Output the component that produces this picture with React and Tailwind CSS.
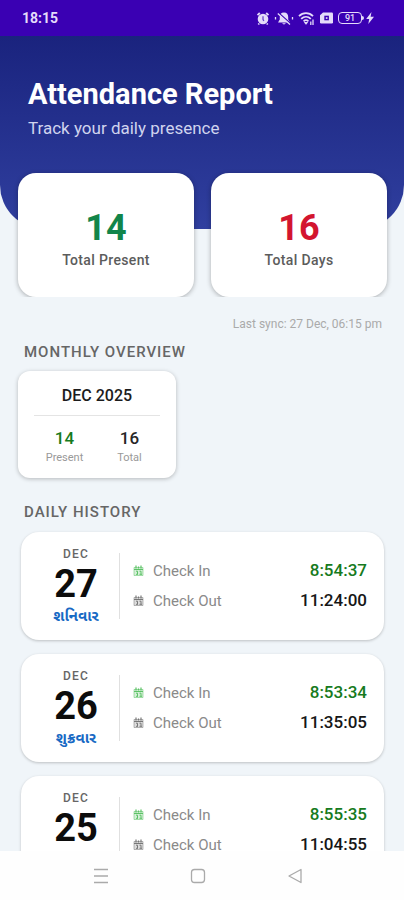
const days = [
  { month: "DEC", day: "27", weekday: "શનિવાર", checkIn: "8:54:37", checkOut: "11:24:00" },
  { month: "DEC", day: "26", weekday: "શુક્રવાર", checkIn: "8:53:34", checkOut: "11:35:05" },
  { month: "DEC", day: "25", weekday: "ગુરુવાર", checkIn: "8:55:35", checkOut: "11:04:55" },
];

const StatusBar = () => {
  return (
    <div className="flex h-9 shrink-0 items-center justify-between bg-[#3a00b3] pl-[22px] pr-[29px] text-[#e4dcfa]">
      <span className="text-sm font-bold">18:15</span>
      <div className="flex items-center gap-1">
        {/* Alarm */}
        <svg width="14" height="15" viewBox="0 0 14 15" fill="none">
          <circle cx="7" cy="8" r="5.300" fill="currentColor" />
          <path d="M1.500 4.200 3.800 2M12.500 4.200 10.200 2M3.200 12.500l-.9 1M10.800 12.500l.9 1" stroke="currentColor" strokeWidth="1.8" />
          <path d="M7 5.300v3l.8 1.700" stroke="#6a44cc" strokeWidth="1.300" />
        </svg>
        {/* Muted bell */}
        <svg width="20" height="15" viewBox="0 0 20 15" fill="none">
          <path d="M10 1.500c-3 0-4.200 2-4.200 4.500v2.500L4 11.500h12L14.200 8.500V6c0-2.500-1.200-4.500-4.200-4.500zM8.300 12.300h3.400c-.3 1.500-3.100 1.500-3.400 0z" fill="currentColor" />
          <path d="M5 2.300 17 13" stroke="#3a00b3" strokeWidth="1.500" />
          <path d="M3.800 2.500 16 13.500M1.500 6v2.500M18.500 6v2.500" stroke="currentColor" strokeWidth="1.300" />
        </svg>
        {/* Wifi */}
        <svg width="17" height="15" viewBox="0 0 17 15" fill="none" stroke="currentColor" strokeWidth="1.800">
          <path d="M1 5.200c4-4 10-4 14 0M3.200 7.800c2.800-2.700 6.800-2.700 9.600 0M5.600 10.300c1.500-1.400 3.300-1.400 4.800 0" />
          <path d="M6.500 11.500h3L8 13.300z" fill="currentColor" strokeWidth="1" />
          <path d="M12.800 10.500v3.500M15 8.500v5.500" strokeWidth="1.300" />
        </svg>
        {/* Sim card */}
        <svg width="15" height="14" viewBox="0 0 15 14">
          <path d="M4 1.500h8.800A1.200 1.200 0 0 1 14 2.700v8.600a1.200 1.200 0 0 1-1.200 1.200H2.200A1.200 1.200 0 0 1 1 11.300V4.300z" fill="currentColor" />
          <path d="M5.300 4.700h4.600v4.600H5.300z" fill="#3a00b3" />
          <path d="M6.800 6.200h1.700v1.700H6.800z" fill="currentColor" />
        </svg>
        <div className="flex items-center">
          <span className="flex h-3 w-6 items-center justify-center rounded border border-current text-[9px] font-medium leading-none">91</span>
          <span className="h-1 w-[2px] rounded-r bg-current" />
          <svg width="10" height="14" viewBox="0 0 10 14" className="ml-px">
            <path d="M6.500 1 1.200 8h3L3.300 13 9 5.800H5.600z" fill="currentColor" />
          </svg>
        </div>
      </div>
    </div>
  );
};

const StatCard = ({ value, label, color }) => {
  return (
    <div className="flex h-[124px] flex-1 flex-col items-center justify-center rounded-[18px] bg-white pt-2 shadow-[0_1px_5px_rgba(0,0,0,0.3)]">
      <span className={`text-[36px] font-bold leading-10 ${color}`}>{value}</span>
      <span className="mt-0.5 text-sm font-medium tracking-wide text-[#5c5c5c]">{label}</span>
    </div>
  );
};

const CalendarIcon = ({ className }) => {
  return (
    <svg width="11" height="12" viewBox="0 0 11 12" fill="none" stroke="currentColor" className={className}>
      <path d="M1 2.500h9v8H1z" fill="currentColor" fillOpacity="0.25" strokeOpacity="0.5" />
      <path d="M3 .5v3M5.500 1.500v2M8 .5v3M1 4.500h9" strokeWidth="1.200" />
      <path d="M3 6.200h1.500v3M3 9.300h2M6.500 6.200H8v3M6.500 9.300H9" />
    </svg>
  );
};

const TimeRow = ({ label, time, iconColor, timeColor }) => {
  return (
    <div className="flex h-[30px] items-center">
      <CalendarIcon className={iconColor} />
      <dt className="ml-[9px] text-[15px] text-[#8a8a8a]">{label}</dt>
      <dd className={`ml-auto text-[17px] font-medium ${timeColor}`}>{time}</dd>
    </div>
  );
};

const DayCard = ({ item }) => {
  return (
    <li className="flex h-[108px] shrink-0 items-center rounded-[18px] bg-white pl-3 pr-[17px] shadow-[0_1px_3px_rgba(0,0,0,0.22)]">
      <div className="flex w-[86px] flex-col items-center">
        <span className="text-xs font-medium leading-4 tracking-widest text-[#666]">{item.month}</span>
        <span className="text-[38px] font-bold leading-[44px] text-[#0c0c0c]">{item.day}</span>
        <span className="text-[15px] font-bold leading-5 text-[#1769c4]">{item.weekday}</span>
      </div>
      <div className="h-[66px] w-px bg-[#e0e0e0]" />
      <dl className="ml-[13px] flex-1">
        <TimeRow label="Check In" time={item.checkIn} iconColor="text-[#5cc266]" timeColor="text-[#167a20]" />
        <TimeRow label="Check Out" time={item.checkOut} iconColor="text-[#777]" timeColor="text-[#161616]" />
      </dl>
    </li>
  );
};

const NavBar = () => {
  return (
    <nav className="flex h-[49px] shrink-0 items-center justify-center gap-[73px] bg-[#fefefe] pr-2 text-[#aaa]">
      <button type="button" aria-label="Recent apps">
        <svg width="24" height="24" viewBox="0 0 24 24" stroke="currentColor" strokeWidth="1.500">
          <path d="M5 5.500h14M5 12h14M5 18.500h14" />
        </svg>
      </button>
      <button type="button" aria-label="Home">
        <svg width="24" height="24" viewBox="0 0 24 24" fill="none" stroke="currentColor" strokeWidth="1.300">
          <rect x="5.500" y="5.500" width="13" height="13" rx="3" />
        </svg>
      </button>
      <button type="button" aria-label="Back">
        <svg width="24" height="24" viewBox="0 0 24 24" fill="none" stroke="currentColor" strokeWidth="1.300" strokeLinejoin="round">
          <path d="M18 5.500v13L6 12z" />
        </svg>
      </button>
    </nav>
  );
};

const App = () => {
  return (
    <div className="flex h-screen flex-col overflow-hidden bg-[#f0f5f9] font-['Roboto','Noto_Sans_Gujarati','Noto_Sans',sans-serif]">
      <StatusBar />

      <main className="min-h-0 flex-1 overflow-hidden">
        {/* Header */}
        <header className="h-[193px] rounded-b-[44px] bg-linear-to-b from-[#1a237e] to-[#303f9f] px-7 pt-10">
          <h1 className="text-[29px] font-bold leading-9 text-white">Attendance Report</h1>
          <p className="mt-1 text-[17px] leading-6 text-[#d0d4ee]">Track your daily presence</p>
        </header>

        {/* Totals */}
        <section className="-mt-16 flex gap-[17px] overflow-hidden pl-[18px] pr-[17px] pt-2">
          <StatCard value="14" label="Total Present" color="text-[#12854a]" />
          <StatCard value="16" label="Total Days" color="text-[#d3152f]" />
        </section>

        <p className="mt-[18px] pr-[22px] text-right text-xs leading-[18px] text-[#aaa]">Last sync: 27 Dec, 06:15 pm</p>

        {/* Monthly overview */}
        <h2 className="mt-[9px] px-6 text-[15px] font-medium leading-5 tracking-[1px] text-[#666]">MONTHLY OVERVIEW</h2>
        <section className="ml-[18px] mt-[9px] h-[107px] w-[158px] rounded-xl bg-white px-4 pt-3.5 shadow-[0_1px_4px_rgba(0,0,0,0.25)]">
          <h3 className="border-b border-[#e4e4e4] pb-2 text-center text-base font-medium leading-[22px] text-[#1c1c1c]">DEC 2025</h3>
          <div className="-mx-0.5 mt-3 flex text-center">
            <div className="flex flex-1 flex-col">
              <span className="text-[17px] font-medium leading-5 text-[#167a20]">14</span>
              <span className="text-[11px] leading-5 text-[#999]">Present</span>
            </div>
            <div className="flex flex-1 flex-col">
              <span className="text-[17px] font-medium leading-5 text-[#262626]">16</span>
              <span className="text-[11px] leading-5 text-[#999]">Total</span>
            </div>
          </div>
        </section>

        {/* Daily history */}
        <h2 className="mt-6 px-6 text-[15px] font-medium leading-5 tracking-[1px] text-[#666]">DAILY HISTORY</h2>
        <ul className="mt-2.5 flex flex-col gap-3.5 pl-[21px] pr-5">
          {days.map((item) => (
            <DayCard key={item.day} item={item} />
          ))}
        </ul>
      </main>

      <NavBar />
    </div>
  );
};

export default App;
